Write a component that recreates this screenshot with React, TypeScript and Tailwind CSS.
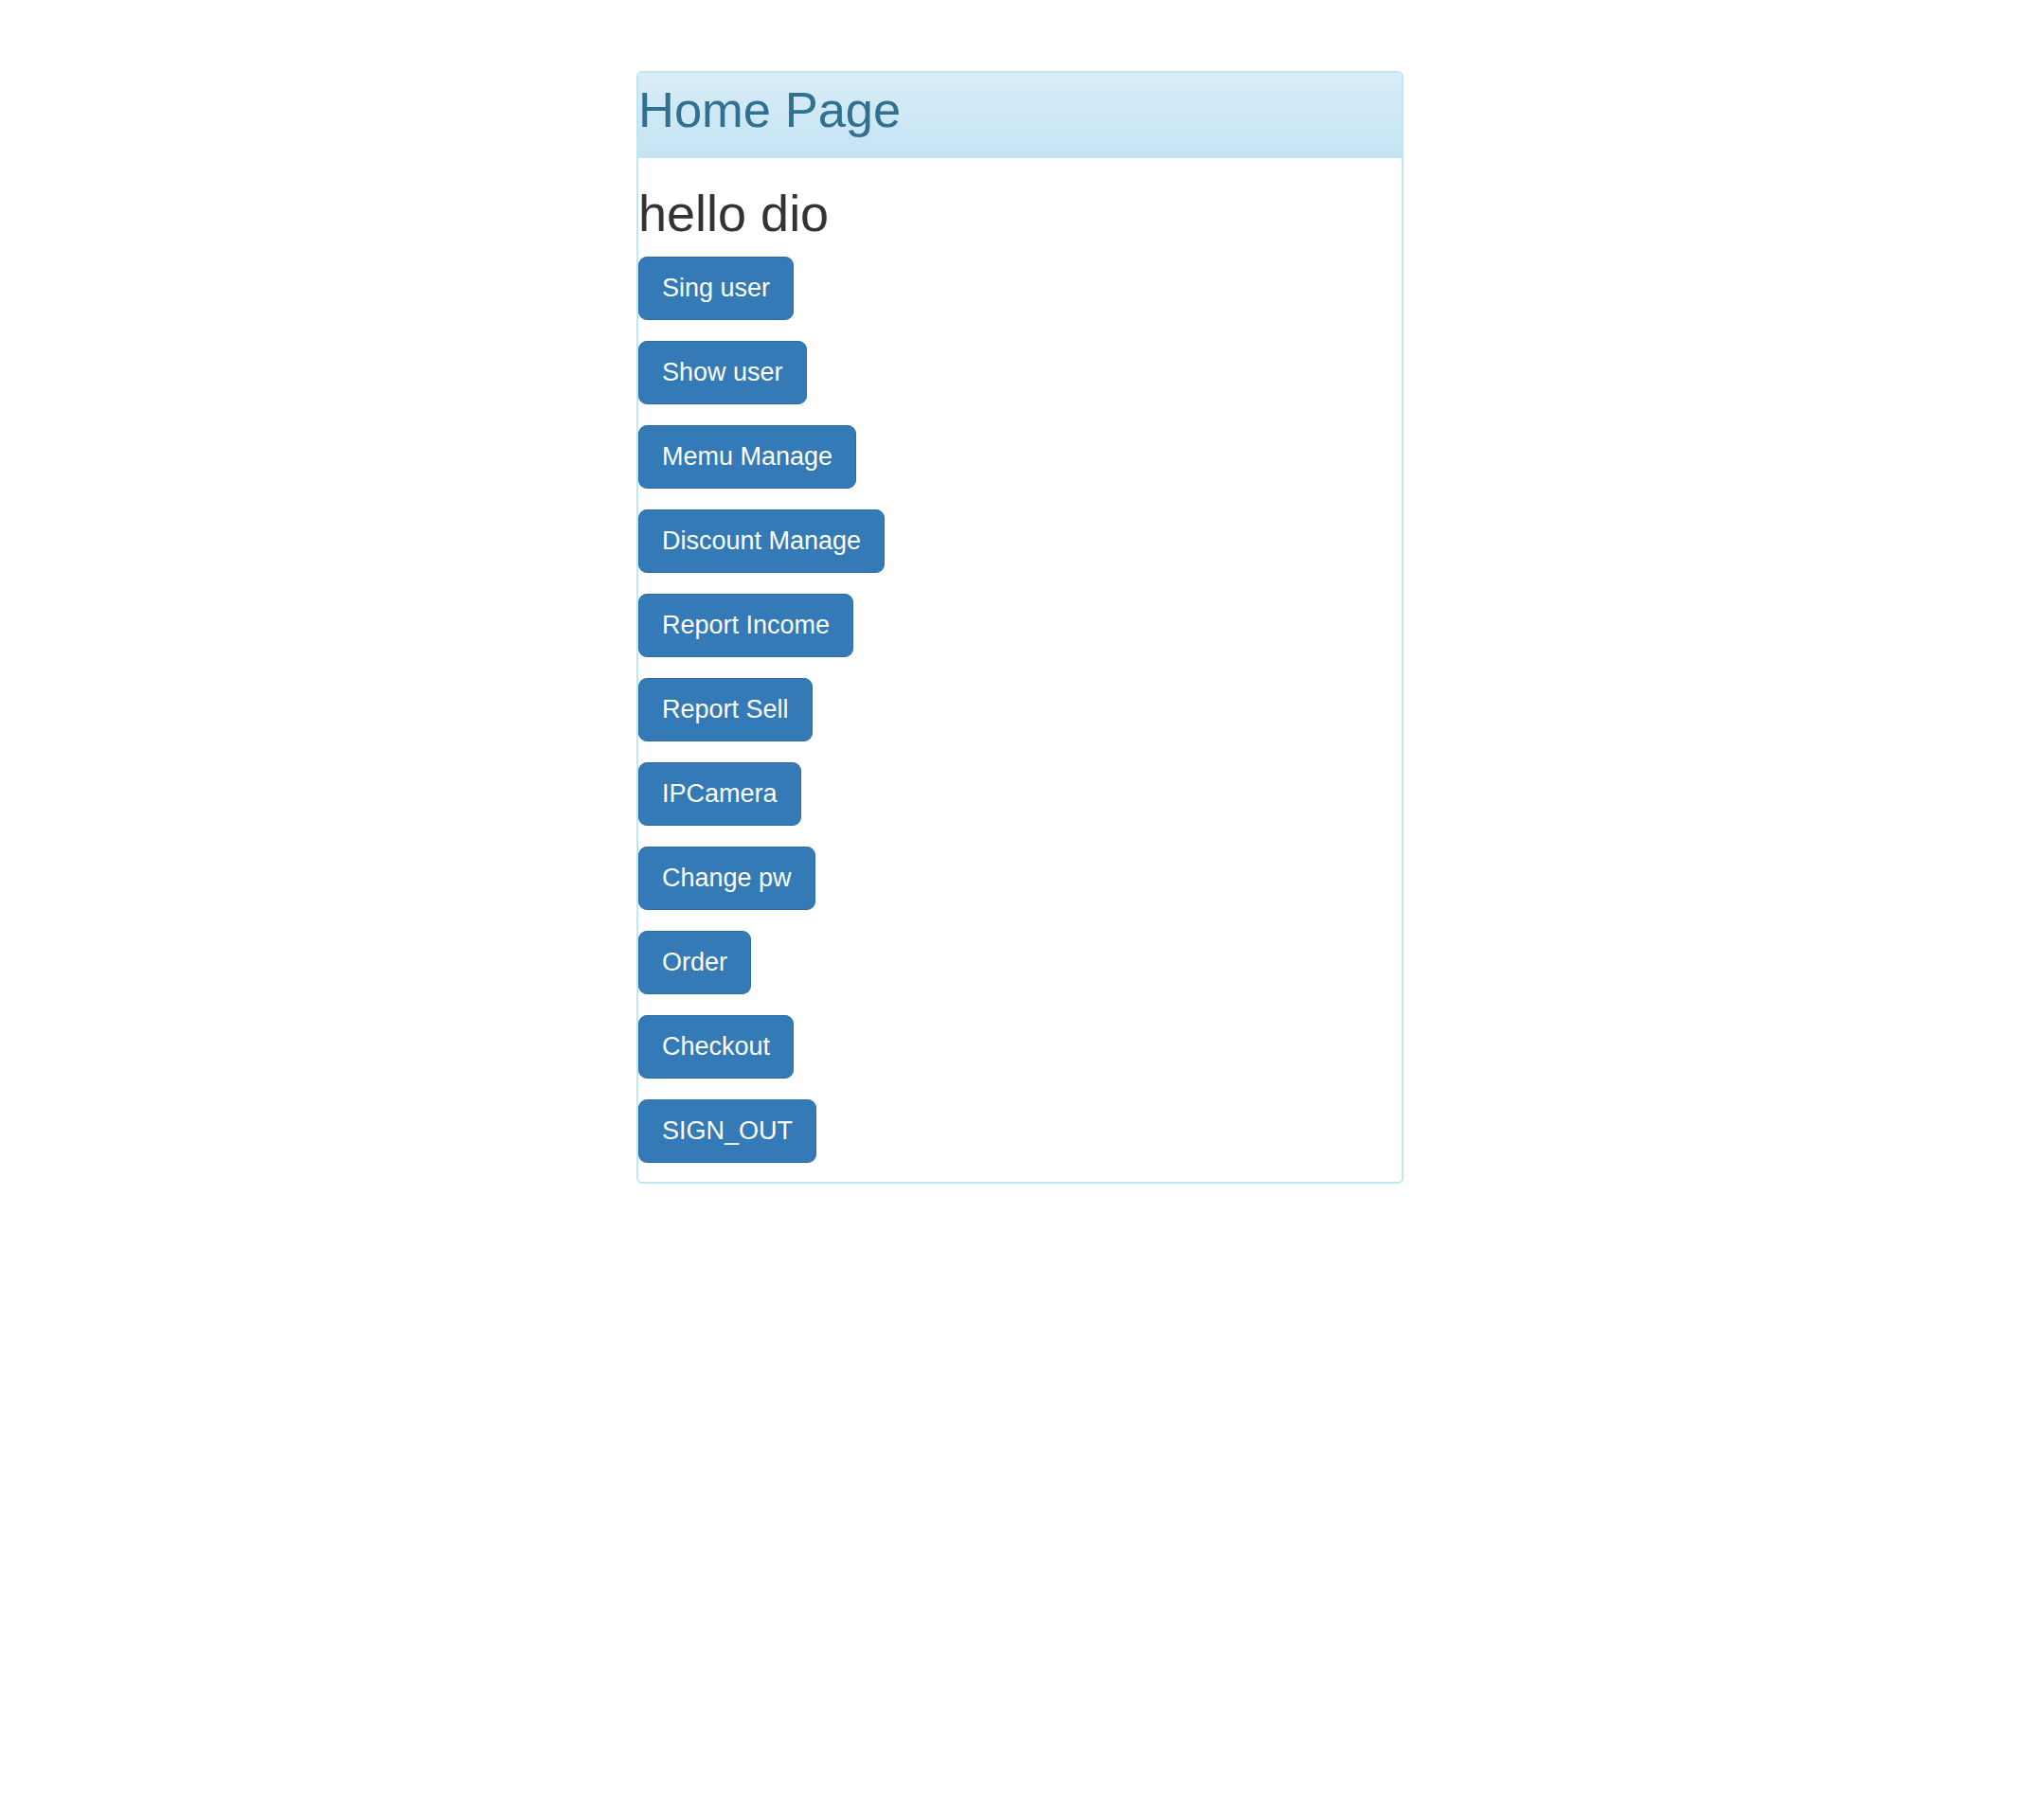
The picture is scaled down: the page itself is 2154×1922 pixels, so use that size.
const menuItems = [
  'Sing user',
  'Show user',
  'Memu Manage',
  'Discount Manage',
  'Report Income',
  'Report Sell',
  'IPCamera',
  'Change pw',
  'Order',
  'Checkout',
  'SIGN_OUT',
];

const App = () => {
  return (
    <div className="min-h-screen bg-white pt-[75px] font-['Liberation_Sans',Arial,sans-serif]">
      <div className="mx-auto w-[810px] rounded-[6px] border-2 border-[#bce8f1] bg-white">
        {/* Heading */}
        <div className="rounded-t-[4px] bg-gradient-to-b from-[#d9edf7] to-[#c4e3f3] pt-[10px] pb-[23px]">
          <h1 className="text-[52.5px] leading-[57px] font-normal text-[#31708f]">Home Page</h1>
        </div>

        {/* Body */}
        <div className="pt-[29px] pb-[20px]">
          <h1 className="mb-[15.5px] text-[54px] leading-[1.1] font-normal text-[#333333]">hello dio</h1>
          <div className="flex flex-col items-start gap-[22px]">
            {menuItems.map((item) => (
              <button
                key={item}
                className="rounded-[9px] border border-[#2e6da4] bg-[#337ab7] px-[24px] py-[14.5px] text-[27px] leading-[36px] text-white hover:bg-[#286090]"
              >
                {item}
              </button>
            ))}
          </div>
        </div>
      </div>
    </div>
  );
};

export default App;
